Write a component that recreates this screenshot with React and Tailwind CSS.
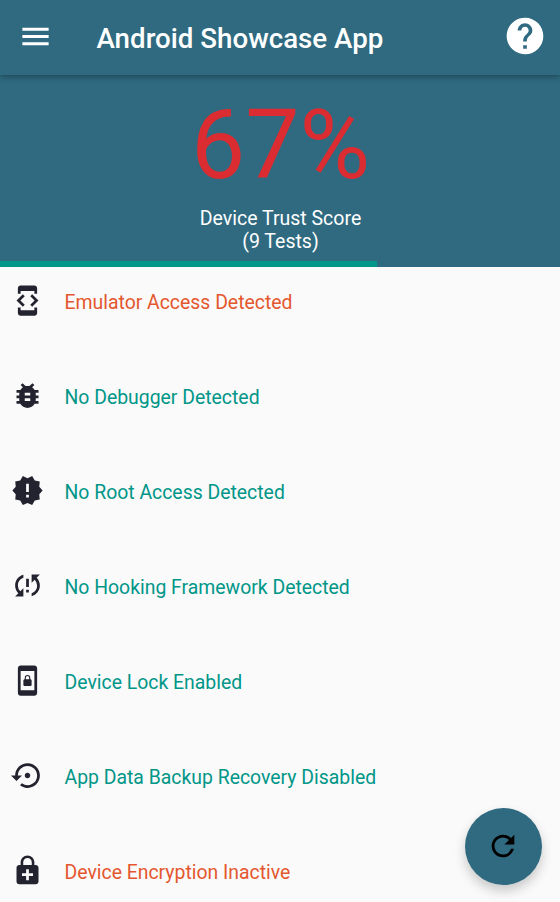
import {
  MdMenu,
  MdHelp,
  MdDeveloperMode,
  MdBugReport,
  MdNewReleases,
  MdSyncProblem,
  MdScreenLockPortrait,
  MdSettingsBackupRestore,
  MdEnhancedEncryption,
  MdRefresh,
} from "react-icons/md";

const tests = [
  { icon: MdDeveloperMode, label: "Emulator Access Detected", failed: true },
  { icon: MdBugReport, label: "No Debugger Detected" },
  { icon: MdNewReleases, label: "No Root Access Detected" },
  { icon: MdSyncProblem, label: "No Hooking Framework Detected" },
  { icon: MdScreenLockPortrait, label: "Device Lock Enabled" },
  { icon: MdSettingsBackupRestore, label: "App Data Backup Recovery Disabled" },
  { icon: MdEnhancedEncryption, label: "Device Encryption Inactive", failed: true },
];

export default function App() {
  return (
    <div className="relative flex h-[902px] w-[560px] flex-col overflow-hidden bg-[#fafafa] font-['Roboto',sans-serif]">
      <header className="z-10 flex h-[75px] shrink-0 items-center bg-[#2f6a80] pr-[13px] pl-[18px] text-white shadow-[0_2px_6px_rgba(0,0,0,0.32)]">
        <MdMenu className="mb-[3px] size-[35px]" />
        <h1 className="mt-0.5 ml-[43.5px] flex-1 text-[27.7px] leading-none font-medium whitespace-nowrap">
          Android Showcase App
        </h1>
        <MdHelp className="mb-[3px] size-[44px]" />
      </header>
      <section className="flex h-[192px] shrink-0 flex-col items-center bg-[#2f6a80]">
        <div className="mt-[13px] h-[119px] pl-px text-[96.5px] leading-[115px] text-[#db2d31]">67%</div>
        <div className="pl-px text-center text-[19.5px] leading-[23px] text-white">
          Device Trust Score
          <br />
          (9 Tests)
        </div>
        <div className="mt-auto h-1.5 w-full">
          <div className="h-full w-[377px] bg-[#009688]" />
        </div>
      </section>
      <ul className="-mt-[13px]">
        {tests.map(({ icon: Icon, label, failed }) => (
          <li key={label} className="flex h-[95px] items-center pl-[11px]">
            <Icon className="mb-0.5 size-[33px] text-[#232330]" />
            <span
              className={`mt-[3px] ml-[20.5px] text-[19.4px] leading-6 whitespace-nowrap ${failed ? "text-[#e4572e]" : "text-[#009688]"}`}
            >
              {label}
            </span>
          </li>
        ))}
      </ul>
      <button className="absolute top-[808px] left-[465px] flex size-[77px] items-center justify-center rounded-full bg-[#2f6a80] pr-px pb-px text-black shadow-[0_6px_12px_rgba(0,0,0,0.2)]">
        <MdRefresh className="size-[34px]" />
      </button>
    </div>
  );
}
